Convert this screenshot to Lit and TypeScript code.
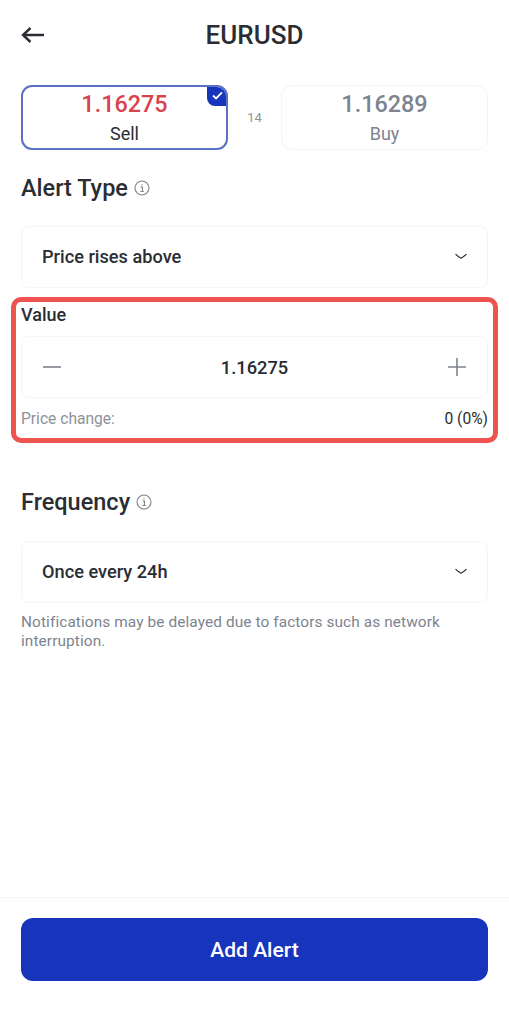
import { LitElement, html, css } from "lit";
import { customElement } from "lit/decorators.js";

const chevron = html`<svg class="chev" viewBox="0 0 14 8" width="12" height="7"><path d="M1 1.5 Q4 4.5 7 6 Q10 4.5 13 1.5" fill="none" stroke="#2a2d33" stroke-width="1.4" stroke-linecap="round" stroke-linejoin="round"/></svg>`;
const info = html`<svg class="info" viewBox="0 0 16 16" width="16" height="16"><circle cx="8" cy="8" r="7" fill="none" stroke="#7d828a" stroke-width="1.1"/><path d="M6.6 7h1.8v4.4M6.4 11.5h3.4M8 4.2v1.4" fill="none" stroke="#7d828a" stroke-width="1.1"/></svg>`;

@customElement("app-root")
export class AppRoot extends LitElement {
  static styles = css`
    :host { display: block; width: 509px; height: 1024px; background: #fff; font-family: Roboto, "Noto Sans", sans-serif; color: #2a2d33; }
    .page { height: 1024px; display: flex; flex-direction: column; box-sizing: border-box; }
    .header { height: 70px; padding: 0 21px; display: grid; grid-template-columns: 40px 1fr 40px; align-items: center; }
    .back { display: block; }
    .title { text-align: center; font-size: 26px; font-weight: 500; line-height: 28px; }
    .body { flex: 1; padding: 15px 21px 0; display: flex; flex-direction: column; }
    .prices { display: grid; grid-template-columns: 207px 1fr 207px; height: 65px; }
    .card { position: relative; box-sizing: border-box; border: 1px solid #f3f4f6; border-radius: 11px; display: flex; flex-direction: column; align-items: center; overflow: hidden; }
    .card.on { border: 2px solid #5a71c4; }
    .num { font-size: 23.4px; font-weight: 500; line-height: 26px; margin-top: 5px; color: #7d838f; }
    .on .num { color: #d9434e; margin-top: 4px; }
    .lab { font-size: 18px; line-height: 20px; margin-top: 7px; color: #7d838f; }
    .on .lab { color: #2a2d33; }
    .tick { position: absolute; top: -2px; right: -2px; width: 21px; height: 21px; background: #1734bd; border-bottom-left-radius: 8px; display: flex; align-items: center; justify-content: center; }
    .spread { display: flex; align-items: center; justify-content: center; font-size: 13px; color: #8e9299; }
    .h2 { display: flex; align-items: center; gap: 6px; font-size: 23.5px; font-weight: 500; line-height: 26px; }
    .h-alert { margin-top: 25px; }
    .h-freq { margin-top: 46px; }
    .box { box-sizing: border-box; height: 62px; border: 1px solid #f4f5f7; border-radius: 8px; display: flex; align-items: center; justify-content: space-between; }
    .select { padding: 0 20px 2px; font-size: 18.2px; font-weight: 500; margin-top: 25px; }
    .value { margin: 9px -10px 0; box-sizing: border-box; height: 146px; border: 5px solid #ef5350; border-radius: 10px; padding: 3px 5px 0; display: flex; flex-direction: column; }
    .value .lbl { font-size: 18px; font-weight: 500; line-height: 20px; margin-bottom: 11px; }
    .stepper { padding: 0 21px; font-size: 18.3px; font-weight: 500; }
    .change { display: flex; justify-content: space-between; font-size: 15.6px; line-height: 18px; margin-top: 12px; color: #2a2d33; }
    .change .k { color: #8e9299; }
    .h-freq + .select { margin-top: 26px; }
    .note { margin: 10px 0 0; font-size: 15.4px; line-height: 19px; color: #7d838f; letter-spacing: 0.1px; }
    .footer { height: 127px; box-sizing: border-box; border-top: 1px solid #f6f6f7; padding: 20px 21px 0; }
    .btn { width: 100%; height: 63px; border: 0; border-radius: 12px; background: #1734bd; color: #fff; font: 500 21px Roboto, sans-serif; display: block; }
  `;

  render() {
    return html`<div class="page">
      <div class="header">
        <svg class="back" viewBox="0 0 24 18" width="24" height="18"><path d="M23 9H2M9.5 2 2 9l7.5 7" fill="none" stroke="#2a2d33" stroke-width="2.4"/></svg>
        <div class="title">EURUSD</div>
        <span></span>
      </div>
      <div class="body">
        <div class="prices">
          <div class="card on">
            <div class="num">1.16275</div>
            <div class="lab">Sell</div>
            <div class="tick"><svg viewBox="0 0 12 10" width="11" height="9"><path d="M1 5l3.4 3.2L11 1.5" fill="none" stroke="#fff" stroke-width="2"/></svg></div>
          </div>
          <div class="spread">14</div>
          <div class="card">
            <div class="num">1.16289</div>
            <div class="lab">Buy</div>
          </div>
        </div>
        <div class="h2 h-alert">Alert Type ${info}</div>
        <div class="box select"><span>Price rises above</span>${chevron}</div>
        <div class="value">
          <div class="lbl">Value</div>
          <div class="box stepper">
            <svg viewBox="0 0 18 18" width="18" height="18"><path d="M0 9h18" stroke="#7d838f" stroke-width="1.6"/></svg>
            <span>1.16275</span>
            <svg viewBox="0 0 18 18" width="18" height="18"><path d="M0 9h18M9 0v18" stroke="#7d838f" stroke-width="1.6"/></svg>
          </div>
          <div class="change"><span class="k">Price change:</span><span>0 (0%)</span></div>
        </div>
        <div class="h2 h-freq">Frequency ${info}</div>
        <div class="box select"><span>Once every 24h</span>${chevron}</div>
        <p class="note">Notifications may be delayed due to factors such as network interruption.</p>
      </div>
      <div class="footer"><button class="btn">Add Alert</button></div>
    </div>`;
  }
}
